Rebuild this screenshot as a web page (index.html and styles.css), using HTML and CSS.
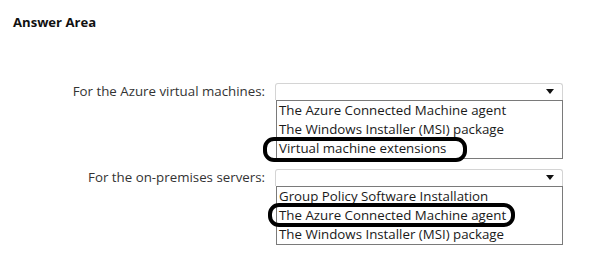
FILE: index.html
```html
<!DOCTYPE html>
<html lang="en">
  <head>
    <meta charset="UTF-8" />
    <title>Answer Area</title>
    <link rel="stylesheet" href="styles.css">
  </head>
  <body>
    <h2 class="title">Answer Area</h2>
    <main class="rows">
      <div class="row">
        <div class="label">For the Azure virtual machines:</div>
        <div class="field">
          <div class="select"><span class="arrow"></span></div>
          <ul class="options">
            <li>The Azure Connected Machine agent</li>
            <li>The Windows Installer (MSI) package</li>
            <li><span class="mark mark-first">Virtual machine extensions</span></li>
          </ul>
        </div>
      </div>
      <div class="row">
        <div class="label">For the on-premises servers:</div>
        <div class="field">
          <div class="select"><span class="arrow"></span></div>
          <ul class="options">
            <li>Group Policy Software Installation</li>
            <li><span class="mark mark-second">The Azure Connected Machine agent</span></li>
            <li>The Windows Installer (MSI) package</li>
          </ul>
        </div>
      </div>
    </main>
  </body>
</html>
```

FILE: styles.css
```css
body {
  font-family: "Open Sans", "Noto Sans", sans-serif;
  background: #fff;
  color: #222;
  margin: 0;
}
.title {
  margin: 0;
  padding: 14px 0 0 13px;
  font-size: 13.1px;
  font-weight: 700;
  color: #111;
  line-height: 16px;
}
.rows {
  display: flex;
  flex-direction: column;
  gap: 10px;
  padding-top: 53px;
}
.row {
  display: flex;
  align-items: flex-start;
}
.label {
  width: 275px;
  text-align: right;
  padding-right: 10px;
  box-sizing: border-box;
  font-size: 13.3px;
  line-height: 17px;
  color: #333;
}
.field {
  width: 288px;
}
.select {
  height: 16px;
  border: 1px solid #d4d4d4;
  border-bottom: none;
  border-radius: 3px 3px 0 0;
  display: flex;
  justify-content: flex-end;
  align-items: center;
  padding-right: 8px;
}
.arrow {
  width: 0;
  height: 0;
  border-left: 4px solid transparent;
  border-right: 4px solid transparent;
  border-top: 5px solid #111;
  margin-bottom: 2px;
}
.options {
  list-style: none;
  margin: 0 0 0 1px;
  padding: 0;
  border: 1px solid #7a7a7a;
}
.options li {
  height: 19px;
  line-height: 19px;
  padding-left: 2px;
  font-size: 13.3px;
  color: #1a1a1a;
  white-space: nowrap;
}
.mark {
  position: relative;
}
.mark::after {
  content: "";
  position: absolute;
  border: 4px solid #000;
  border-radius: 11px;
}
.mark-first::after {
  left: -16px;
  right: -21px;
  top: -2px;
  bottom: -5px;
}
.mark-second::after {
  left: -11px;
  right: -9px;
  top: -3px;
  bottom: -3px;
}
```
